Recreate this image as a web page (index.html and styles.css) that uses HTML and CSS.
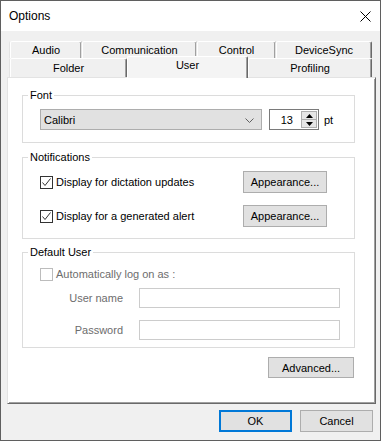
FILE: index.html
```html
<!DOCTYPE html>
<html lang="en">

<head>
    <meta charset="UTF-8">
    <title>Options</title>
    <link rel="stylesheet" href="styles.css">
</head>

<body>
    <div class="window">
        <!-- Title bar -->
        <div class="titlebar">
            <span class="title">Options</span>
            <svg class="close" width="11" height="11" viewBox="0 0 11 11">
                <path d="M0.5 0.5 L10.5 10.5 M10.5 0.5 L0.5 10.5" stroke="#000" stroke-width="1" fill="none" />
            </svg>
        </div>

        <div class="client">
            <!-- Tabs -->
            <div class="tabs">
                <div class="tab-row">
                    <div class="tab tab-audio">Audio</div>
                    <div class="tab tab-communication">Communication</div>
                    <div class="tab tab-control">Control</div>
                    <div class="tab tab-devicesync">DeviceSync</div>
                </div>
                <div class="tab-row tab-row-front">
                    <div class="tab tab-folder">Folder</div>
                    <div class="tab tab-user active">User</div>
                    <div class="tab tab-profiling">Profiling</div>
                </div>
            </div>

            <!-- User page -->
            <div class="panel">
                <fieldset class="group">
                    <legend>Font</legend>
                    <div class="group-body font-body">
                        <div class="combo">
                            <span>Calibri</span>
                            <svg class="chevron" width="9" height="5" viewBox="0 0 9 5">
                                <path d="M0.5 0.5 L4.5 4.5 L8.5 0.5" stroke="#606060" fill="none" />
                            </svg>
                        </div>
                        <div class="spin">
                            <span class="spin-value">13</span>
                            <div class="spin-buttons">
                                <div class="spin-btn">
                                    <svg width="7" height="4" viewBox="0 0 7 4"><path d="M0 4 L3.5 0 L7 4 Z" fill="#000" /></svg>
                                </div>
                                <div class="spin-btn">
                                    <svg width="7" height="4" viewBox="0 0 7 4"><path d="M0 0 L7 0 L3.5 4 Z" fill="#000" /></svg>
                                </div>
                            </div>
                        </div>
                        <span class="unit">pt</span>
                    </div>
                </fieldset>

                <fieldset class="group group-notifications">
                    <legend>Notifications</legend>
                    <div class="group-body notify-body">
                        <div class="notify-row">
                            <label class="check">
                                <span class="box">
                                    <svg width="11" height="11" viewBox="0 0 11 11"><path d="M1.5 5.5 L4 8.5 L9.5 1.5" stroke="#333" fill="none" /></svg>
                                </span>
                                Display for dictation updates
                            </label>
                            <button class="btn btn-appearance">Appearance...</button>
                        </div>
                        <div class="notify-row">
                            <label class="check">
                                <span class="box">
                                    <svg width="11" height="11" viewBox="0 0 11 11"><path d="M1.5 5.5 L4 8.5 L9.5 1.5" stroke="#333" fill="none" /></svg>
                                </span>
                                Display for a generated alert
                            </label>
                            <button class="btn btn-appearance">Appearance...</button>
                        </div>
                    </div>
                </fieldset>

                <fieldset class="group group-user">
                    <legend>Default User</legend>
                    <div class="group-body user-body">
                        <label class="check disabled">
                            <span class="box"></span>
                            Automatically log on as :
                        </label>
                        <div class="field-row">
                            <span class="field-label">User name</span>
                            <div class="textbox"></div>
                        </div>
                        <div class="field-row field-row-last">
                            <span class="field-label">Password</span>
                            <div class="textbox"></div>
                        </div>
                    </div>
                </fieldset>

                <div class="advanced-row">
                    <button class="btn btn-advanced">Advanced...</button>
                </div>
            </div>

            <!-- Dialog buttons -->
            <div class="dialog-buttons">
                <button class="btn btn-dialog btn-ok">OK</button>
                <button class="btn btn-dialog">Cancel</button>
            </div>
        </div>
    </div>
</body>

</html>
```

FILE: styles.css
```css
* {
    box-sizing: border-box;
    margin: 0;
    padding: 0;
}

body {
    font-family: "Liberation Sans", Arial, sans-serif;
    font-size: 11px;
    color: #000000;
    background-color: #f0f0f0;
}

.window {
    width: 381px;
    height: 441px;
    border: 1px solid #5f5f5f;
    background-color: #f0f0f0;
    display: flex;
    flex-direction: column;
}

/* Title bar */
.titlebar {
    height: 30px;
    background-color: #ffffff;
    display: flex;
    align-items: center;
    justify-content: space-between;
    padding: 0 9px 0 8px;
}

.title {
    font-size: 12px;
}

.close {
    margin-top: 1px;
}

.client {
    flex: 1;
    padding: 10px 4px 0 6px;
}

/* Tabs */
.tabs {
    padding-left: 3px;
}

.tab-row {
    display: flex;
}

.tab {
    height: 17px;
    line-height: 16px;
    text-align: center;
    background-color: #f0f0f0;
    border-left: 1px solid #ffffff;
    border-top: 1px solid #ffffff;
    border-right: 1px solid #696969;
    box-shadow: inset -1px 0 #a0a0a0, -1px 0 #e3e3e3;
    border-radius: 2px 2px 0 0;
}

.tab-row-front .tab {
    height: 19px;
    line-height: 18px;
}

.tab-audio { width: 72px; }
.tab-communication { width: 115px; }
.tab-control { width: 79px; }
.tab-devicesync { width: 96px; }
.tab-folder { width: 117px; }
.tab-user { width: 121px; }
.tab-profiling { width: 124px; }

.tab-row-front .tab.active {
    position: relative;
    z-index: 1;
    height: 22px;
    line-height: 17px;
    margin-top: -2px;
    margin-bottom: -1px;
    background-color: #f4f4f4;
    box-shadow: inset -1px 0 #a0a0a0;
}

/* Page */
.panel {
    height: 327px;
    background-color: #ffffff;
    border-left: 1px solid #e3e3e3;
    border-top: 1px solid #e3e3e3;
    border-right: 1px solid #696969;
    border-bottom: 1px solid #696969;
    box-shadow: inset 1px 1px #ffffff, inset -1px -1px #a0a0a0;
    padding: 11px 20px 0 14px;
}

.group {
    border: 1px solid #dcdcdc;
    min-width: 0;
}

.group legend {
    margin-left: 5px;
    padding: 0 2px;
    line-height: 13px;
}

.group-notifications {
    margin-top: 8px;
}

.group-user {
    margin-top: 7px;
}

.group-body {
    padding-left: 17px;
}

/* Font */
.font-body {
    display: flex;
    align-items: center;
    padding-top: 7px;
    padding-bottom: 12px;
}

.combo {
    width: 222px;
    height: 21px;
    background-color: #e1e1e1;
    border: 1px solid #adadad;
    display: flex;
    align-items: center;
    justify-content: space-between;
    padding: 0 7px 0 3px;
}

.chevron {
    margin-top: 1px;
}

.spin {
    width: 50px;
    height: 21px;
    margin-left: 7px;
    border: 1px solid #7a7a7a;
    background-color: #ffffff;
    display: flex;
    align-items: center;
    padding: 1px;
}

.spin-value {
    flex: 1;
    text-align: right;
    padding-right: 8px;
}

.spin-buttons {
    width: 16px;
    height: 17px;
    display: flex;
    flex-direction: column;
}

.spin-btn {
    flex: 1;
    background-color: #e5e5e5;
    border: 1px solid #adadad;
    display: flex;
    align-items: center;
    justify-content: center;
}

.spin-btn + .spin-btn {
    border-top: 0;
}

.unit {
    margin-left: 5px;
}

/* Notifications */
.notify-body {
    padding-top: 7px;
    padding-bottom: 11px;
    padding-right: 27px;
    display: flex;
    flex-direction: column;
    gap: 12px;
}

.notify-row {
    display: flex;
    align-items: center;
    justify-content: space-between;
    height: 22px;
}

.check {
    display: flex;
    align-items: center;
    gap: 3px;
    line-height: 13px;
}

.box {
    width: 13px;
    height: 13px;
    border: 1px solid #333333;
    background-color: #ffffff;
    display: flex;
}

.check.disabled {
    color: #6d6d6d;
}

.check.disabled .box {
    border-color: #bcbcbc;
}

/* Default user */
.user-body {
    padding-top: 9px;
    padding-bottom: 7px;
}

.field-row {
    display: flex;
    align-items: center;
    margin-top: 7px;
}

.field-row-last {
    margin-top: 12px;
}

.field-label {
    width: 83px;
    text-align: right;
    margin-right: 16px;
    color: #6d6d6d;
}

.textbox {
    width: 201px;
    height: 20px;
    border: 1px solid #cccccc;
    background-color: #ffffff;
}

/* Buttons */
.btn {
    font-family: "Liberation Sans", Arial, sans-serif;
    font-size: 11px;
    color: #000000;
    background-color: #e1e1e1;
    border: 1px solid #adadad;
    height: 22px;
}

.btn-appearance {
    width: 84px;
}

.advanced-row {
    display: flex;
    justify-content: flex-end;
    margin-top: 9px;
    padding-right: 1px;
}

.btn-advanced {
    width: 86px;
    height: 21px;
}

.dialog-buttons {
    display: flex;
    justify-content: flex-end;
    gap: 8px;
    margin-top: 6px;
    padding-right: 3px;
}

.btn-dialog {
    width: 73px;
}

.btn-ok {
    border: 2px solid #0078d7;
}
```
